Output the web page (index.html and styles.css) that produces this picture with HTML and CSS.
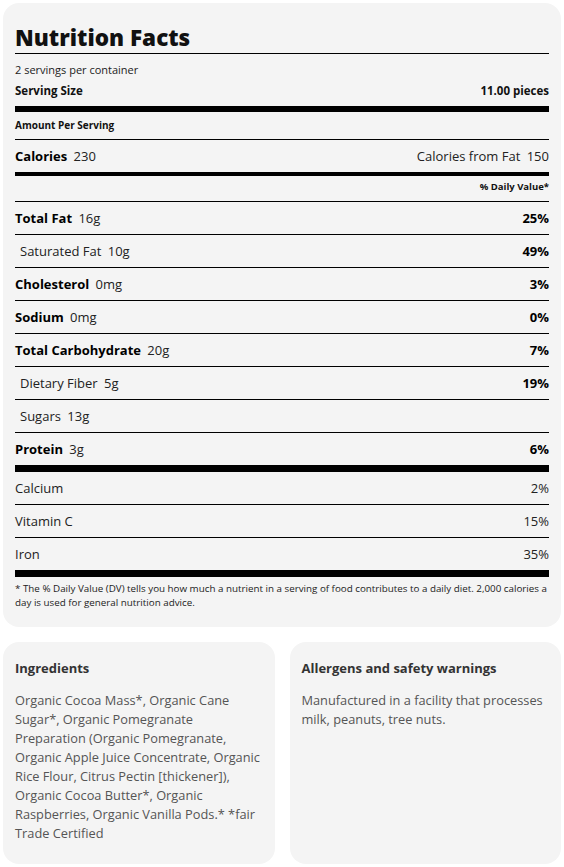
FILE: index.html
```html
<!DOCTYPE html>
<html lang="en">
<head>
    <meta charset="UTF-8">
    <meta name="viewport" content="width=device-width, initial-scale=1.0">
    <title>Nutrition Facts</title>
    <link rel="stylesheet" href="styles.css">
</head>
<body>
    <div class="page">
        <section class="facts">
            <h1 class="facts-title">Nutrition Facts</h1>
            <div class="serving">
                <p class="servings">2 servings per container</p>
                <div class="serving-size"><span>Serving Size</span><span>11.00 pieces</span></div>
            </div>
            <div class="amount">Amount Per Serving</div>
            <div class="row calories"><span><b class="name">Calories</b> 230</span><span><span class="name">Calories from Fat</span> 150</span></div>
            <div class="dv">% Daily Value*</div>
            <div class="row"><span><b class="name">Total Fat</b> 16g</span><b>25%</b></div>
            <div class="row sub"><span><span class="name">Saturated Fat</span> 10g</span><b>49%</b></div>
            <div class="row"><span><b class="name">Cholesterol</b> 0mg</span><b>3%</b></div>
            <div class="row"><span><b class="name">Sodium</b> 0mg</span><b>0%</b></div>
            <div class="row"><span><b class="name">Total Carbohydrate</b> 20g</span><b>7%</b></div>
            <div class="row sub"><span><span class="name">Dietary Fiber</span> 5g</span><b>19%</b></div>
            <div class="row sub"><span><span class="name">Sugars</span> 13g</span></div>
            <div class="row thick"><span><b class="name">Protein</b> 3g</span><b>6%</b></div>
            <div class="row"><span>Calcium</span><span>2%</span></div>
            <div class="row"><span>Vitamin C</span><span>15%</span></div>
            <div class="row thick"><span>Iron</span><span>35%</span></div>
            <p class="note">* The % Daily Value (DV) tells you how much a nutrient in a serving of food contributes to a daily diet. 2,000 calories a day is used for general nutrition advice.</p>
        </section>
        <div class="details">
            <section class="info">
                <h2>Ingredients</h2>
                <p>Organic Cocoa Mass*, Organic Cane Sugar*, Organic Pomegranate Preparation (Organic Pomegranate, Organic Apple Juice Concentrate, Organic Rice Flour, Citrus Pectin [thickener]), Organic Cocoa Butter*, Organic Raspberries, Organic Vanilla Pods.* *fair Trade Certified</p>
            </section>
            <section class="info">
                <h2>Allergens and safety warnings</h2>
                <p>Manufactured in a facility that processes milk, peanuts, tree nuts.</p>
            </section>
        </div>
    </div>
</body>
</html>
```

FILE: styles.css
```css
*{
    box-sizing: border-box;
}
body{
    margin: 0;
    padding: 3px;
    background: #fff;
    font-family: "Open Sans", "Liberation Sans", sans-serif;
    color: #111;
}
p, h1, h2{
    margin: 0;
}
.facts{
    background: #f4f4f4;
    border-radius: 16px;
    padding: 12px;
}
.facts-title{
    font-size: 22.5px;
    font-weight: 800;
    line-height: 30px;
    padding-top: 8px;
    border-bottom: 1px solid #000;
}
.serving{
    padding: 8px 0;
    border-bottom: 6px solid #000;
}
.servings{
    font-size: 11px;
    line-height: 15px;
    color: #222;
}
.serving-size{
    display: flex;
    justify-content: space-between;
    margin-top: 7px;
    font-size: 11.5px;
    font-weight: 700;
    line-height: 14px;
}
.amount{
    font-size: 10px;
    font-weight: 700;
    line-height: 27px;
    border-bottom: 1px solid #000;
}
.row{
    display: flex;
    justify-content: space-between;
    align-items: center;
    height: 33px;
    font-size: 13px;
    color: #222;
    border-bottom: 1px solid #000;
}
.row b{
    color: #000;
    font-weight: 700;
}
.row .name{
    margin-right: 3px;
}
.calories{
    height: 36px;
    border-bottom-width: 4px;
}
.dv{
    font-size: 9.5px;
    font-weight: 700;
    text-align: right;
    line-height: 14px;
    padding: 4px 0 7px;
    border-bottom: 1px solid #000;
}
.sub{
    padding-left: 5px;
}
.thick{
    height: 39px;
    border-bottom-width: 7px;
}
.note{
    font-size: 9.8px;
    line-height: 14px;
    padding: 5px 0;
    color: #222;
}
.details{
    display: flex;
    gap: 15px;
    margin-top: 15px;
}
.info{
    flex: 1;
    background: #f4f4f4;
    border-radius: 16px;
    padding: 16px 12px 20px;
    min-height: 222px;
}
.info h2{
    font-size: 13px;
    font-weight: 700;
    line-height: 20px;
    color: #333;
}
.info p{
    margin-top: 13px;
    font-size: 12.8px;
    line-height: 19px;
    color: #555;
}
```
